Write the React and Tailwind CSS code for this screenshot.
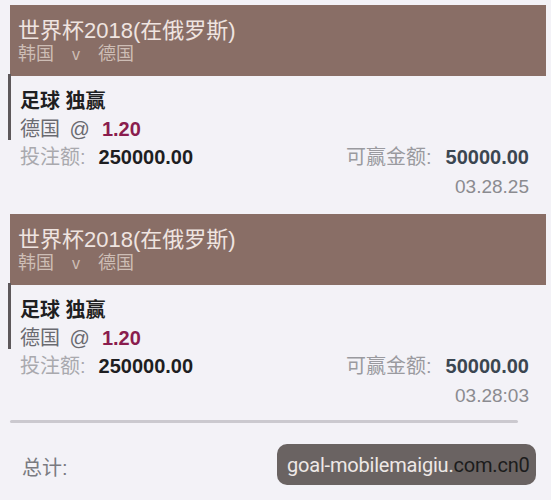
import React from 'react';

const bets = [
  { id: 1, event: '世界杯2018(在俄罗斯)', home: '韩国', away: '德国', market: '足球 独赢', pick: '德国', odds: '1.20', stake: '250000.00', payout: '50000.00', time: '03.28.25' },
  { id: 2, event: '世界杯2018(在俄罗斯)', home: '韩国', away: '德国', market: '足球 独赢', pick: '德国', odds: '1.20', stake: '250000.00', payout: '50000.00', time: '03.28:03' },
];

function BetCard({ bet, first }) {
  return (
    <div className={first ? 'ml-[8px] pt-[5px]' : 'ml-[8px] mt-[12px]'}>
      <div className="ml-[2px] mr-[5px] bg-[#896e66] pl-[8px] pt-[14px] pb-[10px]">
        <div className="text-[22px] leading-[24px] text-[#efe4e0]">{bet.event}</div>
        <div className="text-[18px] leading-[22px] text-[#cdbdb5]">
          {bet.home}
          <span className="mx-[18px] text-[16px]">v</span>
          {bet.away}
        </div>
      </div>
      <div className="flex">
        <div className="-mt-[2px] h-[66px] w-[3px] shrink-0 bg-[#5d585b]" />
        <div className="flex-1 pl-[9px] pr-[22px] pt-[11px]">
          <div className="text-[20px] font-bold leading-[28px] text-[#1f1f22]">{bet.market}</div>
          <div className="text-[20px] leading-[28px] text-[#6a6a70]">
            {bet.pick} <span className="ml-[4px]">@</span>
            <span className="ml-[12px] font-bold text-[#8a1d4e]">{bet.odds}</span>
          </div>
          <div className="flex items-center justify-between text-[20px] leading-[28px]">
            <div>
              <span className="text-[#a9a9ae]">投注额:</span>
              <span className="ml-[13px] font-bold text-[#1e1e22]">{bet.stake}</span>
            </div>
            <div>
              <span className="text-[#9a9a9f]">可赢金额:</span>
              <span className="ml-[14px] font-bold text-[#3b4651]">{bet.payout}</span>
            </div>
          </div>
          <div className="text-right text-[19px] leading-[31px] text-[#8b8b90]">{bet.time}</div>
        </div>
      </div>
    </div>
  );
}

export default function App() {
  return (
    <div className="relative h-[500px] w-[551px] overflow-hidden bg-[#f3f2f7] font-['Liberation_Sans','Noto_Sans_CJK_SC',sans-serif]">
      {bets.map((bet, i) => (
        <BetCard key={bet.id} bet={bet} first={i === 0} />
      ))}

      <div className="ml-[10px] mr-[33px] mt-[9px] h-[3px] rounded-full bg-[#cbc9cf]" />

      <div className="flex items-center justify-between pl-[22px] pr-[24px] pt-[35px]">
        <span className="text-[20px] leading-[20px] text-[#7a7a80]">总计:</span>
      </div>

      {/* source watermark */}
      <div className="absolute left-[277px] top-[444px] flex h-[41px] w-[259px] items-center rounded-[10px] bg-[#6a6362] pl-[10px] font-['Roboto',sans-serif] text-[20px] tracking-[-0.2px]">
        <span className="text-[#eee8e6]">goal-mobilemaigiu.</span>
        <span className="text-[#1c1c1c]">com.cn0</span>
      </div>
    </div>
  );
}
